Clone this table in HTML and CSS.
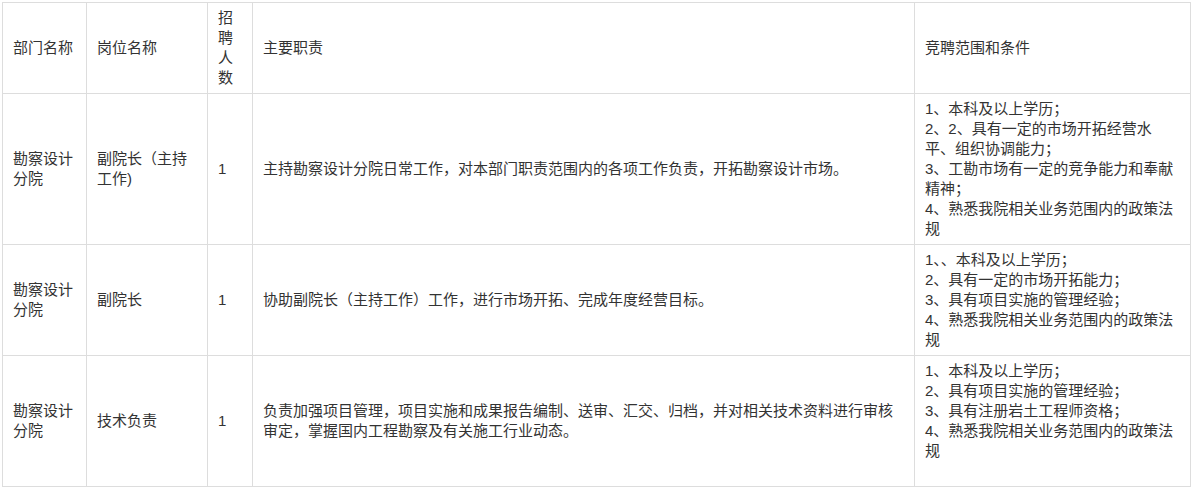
FILE: index.html
```html
<!DOCTYPE html>
<html lang="zh-CN">
<head>
    <meta charset="UTF-8">
    <title>岗位竞聘</title>
    <link rel="stylesheet" href="styles.css">
</head>
<body>
    <div class="wrap">
        <table class="job-table">
            <colgroup>
                <col class="c-dept">
                <col class="c-post">
                <col class="c-num">
                <col class="c-duty">
                <col class="c-cond">
            </colgroup>
            <tr>
                <td>部门名称</td>
                <td>岗位名称</td>
                <td>招聘人数</td>
                <td>主要职责</td>
                <td>竞聘范围和条件</td>
            </tr>
            <tr>
                <td>勘察设计分院</td>
                <td>副院长（主持工作)</td>
                <td>1</td>
                <td>主持勘察设计分院日常工作，对本部门职责范围内的各项工作负责，开拓勘察设计市场。</td>
                <td>
                    <p>1、本科及以上学历；</p>
                    <p>2、2、具有一定的市场开拓经营水平、组织协调能力；</p>
                    <p>3、工勘市场有一定的竞争能力和奉献精神；</p>
                    <p>4、熟悉我院相关业务范围内的政策法规</p>
                </td>
            </tr>
            <tr>
                <td>勘察设计分院</td>
                <td>副院长</td>
                <td>1</td>
                <td>协助副院长（主持工作）工作，进行市场开拓、完成年度经营目标。</td>
                <td>
                    <p>1、、本科及以上学历；</p>
                    <p>2、具有一定的市场开拓能力；</p>
                    <p>3、具有项目实施的管理经验；</p>
                    <p>4、熟悉我院相关业务范围内的政策法规</p>
                </td>
            </tr>
            <tr>
                <td>勘察设计分院</td>
                <td>技术负责</td>
                <td>1</td>
                <td>负责加强项目管理，项目实施和成果报告编制、送审、汇交、归档，并对相关技术资料进行审核审定，掌握国内工程勘察及有关施工行业动态。</td>
                <td>
                    <p>1、本科及以上学历；</p>
                    <p>2、具有项目实施的管理经验；</p>
                    <p>3、具有注册岩土工程师资格；</p>
                    <p>4、熟悉我院相关业务范围内的政策法规</p>
                    <p>&nbsp;</p>
                </td>
            </tr>
        </table>
    </div>
</body>
</html>
```

FILE: styles.css
```css
body {
    margin: 0;
    padding: 0;
    background: #fff;
    font-family: "Liberation Sans", "Noto Sans CJK SC", sans-serif;
    font-size: 15px;
    color: #333;
}
.wrap {
    padding: 2px 0 0 2px;
}
.job-table {
    border-collapse: collapse;
    table-layout: fixed;
    width: 1189px;
}
.job-table td {
    border: 1px solid #ddd;
    padding: 5px 10px;
    line-height: 20px;
    vertical-align: middle;
    text-align: left;
    word-break: break-all;
}
.job-table p {
    margin: 0;
}
.c-dept { width: 84px; }
.c-post { width: 121px; }
.c-num { width: 45px; }
.c-duty { width: 662px; }
.c-cond { width: 276px; }
```
